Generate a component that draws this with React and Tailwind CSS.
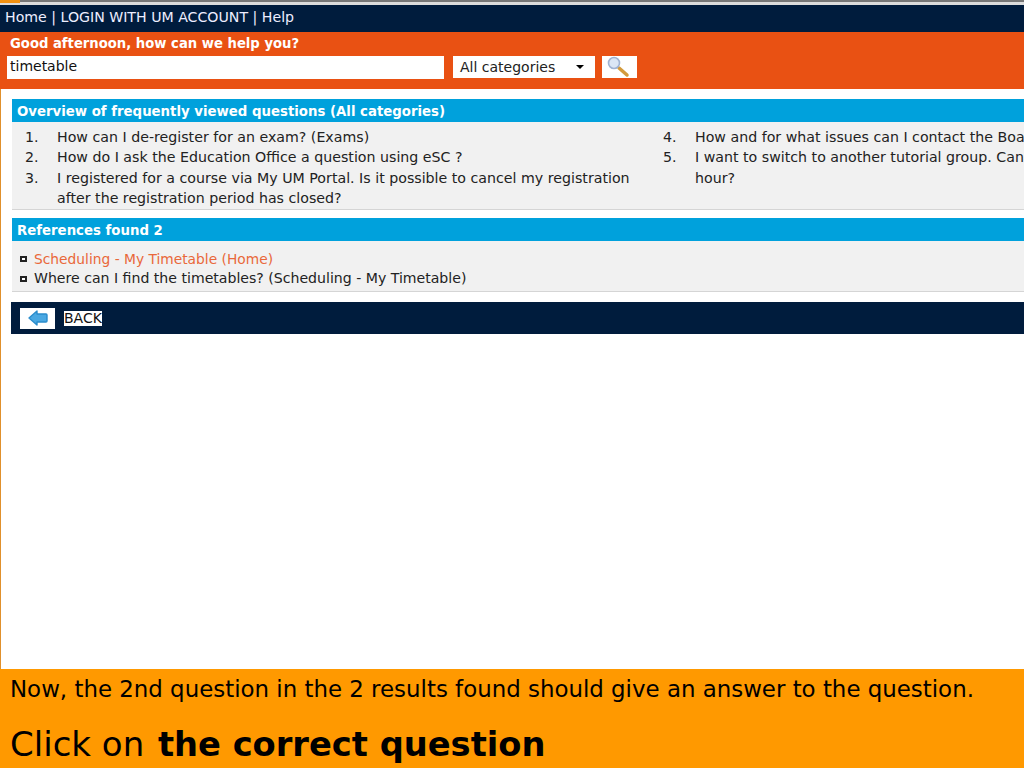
import React from 'react';

const font = { fontFamily: '"DejaVu Sans", Verdana, sans-serif' };

const SectionBar = ({ children }) => (
    <div className="h-[23px] pl-[5px] bg-[#00a1dc] text-white font-bold text-[13.3px] leading-[25px] whitespace-nowrap">
        {children}
    </div>
);

const Question = ({ n, children }) => (
    <li className="flex">
        <span className="w-[32px] shrink-0">{n}.</span>
        <span>{children}</span>
    </li>
);

const Reference = ({ children, className }) => (
    <div className={`flex items-center h-[20px] ${className}`}>
        <span className="w-[7px] h-[6px] ml-[8px] mr-[7px] border-2 border-[#222] bg-white shrink-0" />
        {children}
    </div>
);

export default function App() {
    return (
        <div style={font} className="w-[1024px] h-[768px] overflow-hidden flex flex-col bg-white text-[#222]">
            <div className="h-[2px] bg-[#777] relative">
                <div className="absolute left-0 top-0 w-[20px] h-[3px] bg-[#f29111]" />
            </div>
            <div className="h-[3px] bg-[#dcdcdc]" />

            <div className="h-[27px] pl-[5px] bg-[#001c3d] text-[#eef] text-[14.15px] leading-[25px] whitespace-nowrap">
                Home | LOGIN WITH UM ACCOUNT | Help
            </div>

            <div className="h-[57px] bg-[#e95113] flex flex-col">
                <div className="h-[23px] pl-[10px] text-white font-bold text-[13.2px] leading-[23px]">
                    Good afternoon, how can we help you?
                </div>
                <div className="flex items-start mt-[1px]">
                    <div className="w-[437px] h-[23px] ml-[7px] bg-white pl-[3px] text-[14px] leading-[21px] text-[#111]">timetable</div>
                    <div className="w-[142px] h-[22px] ml-[9px] bg-white flex items-center justify-between pl-[7px] pr-[11px] text-[14px]">
                        All categories
                        <span className="w-0 h-0 border-x-[4px] border-x-transparent border-t-[4px] border-t-black" />
                    </div>
                    <div className="w-[35px] h-[22px] ml-[7px] bg-white">
                        <svg width="35" height="22" viewBox="0 0 35 22">
                            <line x1="17" y1="12" x2="25" y2="19" stroke="#d39a3c" strokeWidth="3.5" strokeLinecap="round" />
                            <circle cx="12" cy="7" r="5.5" fill="#dbe6f5" stroke="#9fb2d2" strokeWidth="1.6" />
                        </svg>
                    </div>
                </div>
            </div>

            <div className="flex-1 min-h-0 border-l border-[#e0902c] pt-[10px] pl-[11px] flex flex-col">
                <SectionBar>Overview of frequently viewed questions (All categories)</SectionBar>
                <div className="h-[88px] bg-[#f1f1f1] border-b border-[#d5d5d5] text-[14.2px] leading-[20.3px] pt-[5px] flex overflow-hidden">
                    <ol className="w-[651px] shrink-0 pl-[13px] pr-[30px]">
                        <Question n={1}>How can I de-register for an exam? (Exams)</Question>
                        <Question n={2}>How do I ask the Education Office a question using eSC ?</Question>
                        <Question n={3}>I registered for a course via My UM Portal. Is it possible to cancel my registration after the registration period has closed?</Question>
                    </ol>
                    <ol className="w-[620px] shrink-0 whitespace-nowrap">
                        <Question n={4}>How and for what issues can I contact the Board of Examiners?</Question>
                        <Question n={5}>I want to switch to another tutorial group. Can I do this up to one<br />hour?</Question>
                    </ol>
                </div>

                <div className="h-[8px]" />
                <SectionBar>References found 2</SectionBar>
                <div className="h-[51px] bg-[#f1f1f1] border-b border-[#d5d5d5] text-[14.1px] pt-[8px]">
                    <Reference className="text-[#e9683a] text-[13.8px]">Scheduling - My Timetable (Home)</Reference>
                    <Reference>Where can I find the timetables? (Scheduling - My Timetable)</Reference>
                </div>

                <div className="h-[32px] mt-[10px] -ml-px bg-[#001c3d] flex items-center">
                    <div className="w-[35px] h-[21px] ml-[9px] bg-white flex items-center justify-center">
                        <svg width="20" height="16" viewBox="0 0 20 16">
                            <path d="M1 8 L9 1 V4 H18 Q19 4 19 5 V11 Q19 12 18 12 H9 V15 Z" fill="#4aa8e2" stroke="#2a8ccc" strokeWidth="1.4" strokeLinejoin="round" />
                        </svg>
                    </div>
                    <span className="ml-[9px] bg-white text-[#111] text-[14px] leading-[15px]">BACK</span>
                </div>
            </div>

            <div className="h-[99px] bg-[#ff9900] text-black pl-[10px]">
                <div className="text-[22.9px] leading-[26px] pt-[7px]">Now, the 2nd question in the 2 results found should give an answer to the question.</div>
                <div className="text-[34px] leading-[40px] mt-[22px]">Click on <b className="ml-[3px] text-[33.7px]">the correct question</b></div>
            </div>
        </div>
    );
}
